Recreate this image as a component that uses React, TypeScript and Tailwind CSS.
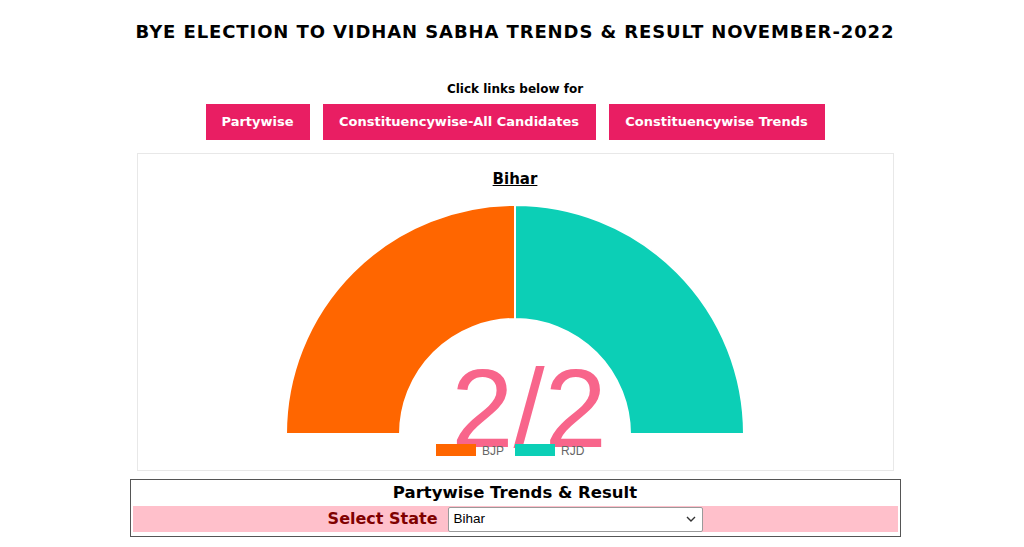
import React from "react";

const font = { fontFamily: '"DejaVu Sans", Verdana, sans-serif' };

function Gauge() {
  const cx = 377;
  const cy = 238;
  const R = 229;
  const r = 115;
  const left = `M ${cx - R} ${cy} A ${R} ${R} 0 0 1 ${cx} ${cy - R} L ${cx} ${cy - r} A ${r} ${r} 0 0 0 ${cx - r} ${cy} Z`;
  const right = `M ${cx} ${cy - R} A ${R} ${R} 0 0 1 ${cx + R} ${cy} L ${cx + r} ${cy} A ${r} ${r} 0 0 0 ${cx} ${cy - r} Z`;
  return (
    <svg width="755" height="266" viewBox="0 0 755 266" className="block mt-[7px]">
      <path d={left} fill="#ff6600" stroke="#ffffff" strokeWidth="2" />
      <path d={right} fill="#0ccfb6" stroke="#ffffff" strokeWidth="2" />
      <text
        x="391"
        y="251"
        textAnchor="middle"
        fill="#f8658b"
        style={{ fontFamily: '"Liberation Sans", Arial, sans-serif', fontSize: 112 }}
      >
        2/2
      </text>
      <rect x="298" y="248" width="40" height="12" fill="#ff6600" />
      <text x="344" y="259" fill="#666666" style={{ fontFamily: '"Liberation Sans", Arial, sans-serif', fontSize: 12 }}>
        BJP
      </text>
      <rect x="377" y="248" width="40" height="12" fill="#0ccfb6" />
      <text x="423" y="259" fill="#666666" style={{ fontFamily: '"Liberation Sans", Arial, sans-serif', fontSize: 12 }}>
        RJD
      </text>
    </svg>
  );
}

export default function App() {
  return (
    <div className="w-[1024px] h-[547px] bg-white overflow-hidden pl-[6px]" style={font}>
      <div className="flex flex-col items-center">
        <h1 className="mt-[21px] text-[18px] leading-[22px] font-bold text-black tracking-[0.9px]">
          BYE ELECTION TO VIDHAN SABHA TRENDS &amp; RESULT NOVEMBER-2022
        </h1>
        <p className="mt-[38px] text-[12px] leading-[16px] font-bold text-black">Click links below for</p>
        <div className="mt-[7px] flex gap-[13px]">
          <a className="w-[104px] h-[36px] flex items-center justify-center bg-[#e91e63] text-white text-[13px] font-bold">
            Partywise
          </a>
          <a className="w-[273px] h-[36px] flex items-center justify-center bg-[#e91e63] text-white text-[13px] font-bold">
            Constituencywise-All Candidates
          </a>
          <a className="w-[216px] h-[36px] flex items-center justify-center bg-[#e91e63] text-white text-[13px] font-bold">
            Constituencywise Trends
          </a>
        </div>
        <div className="mt-[13px] w-[757px] h-[318px] border border-[#e8e8e8] flex flex-col items-center">
          <div className="mt-[15px] text-[15px] leading-[20px] font-bold underline text-black">Bihar</div>
          <Gauge />
        </div>
        <div className="mt-[8px] w-[771px] border border-[#555555] px-[2px] pt-[2px] pb-[4px] flex flex-col gap-[2px]">
          <div className="h-[22px] flex items-center justify-center text-[16.5px] font-bold text-black">
            Partywise Trends &amp; Result
          </div>
          <div className="h-[26px] bg-[#ffc0cb] flex items-center">
            <div className="w-[305px] text-right text-[16px] font-bold text-[#800000]">Select State</div>
            <div className="ml-[10px] w-[255px] h-[25px] bg-white border border-[#9a9a9a] rounded-[2px] flex items-center justify-between pl-[5px] pr-[6px]">
              <span className="text-[13.5px] text-black" style={{ fontFamily: '"Liberation Sans", Arial, sans-serif' }}>
                Bihar
              </span>
              <svg width="10" height="6" viewBox="0 0 10 6">
                <path d="M1 1 L5 5 L9 1" fill="none" stroke="#333" strokeWidth="1.4" />
              </svg>
            </div>
          </div>
        </div>
      </div>
    </div>
  );
}
